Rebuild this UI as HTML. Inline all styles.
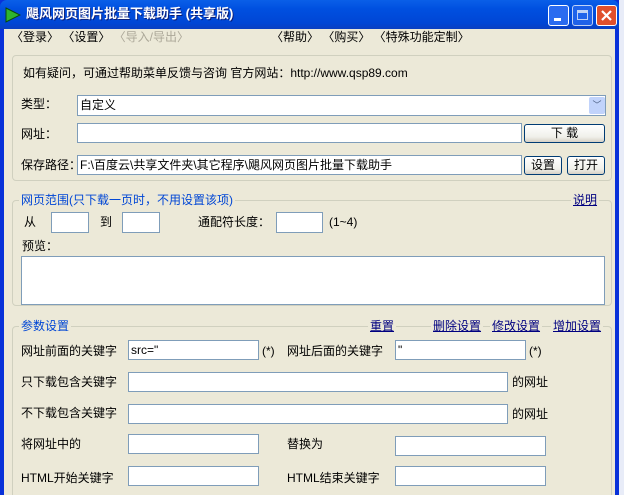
<!DOCTYPE html>
<html style="width:624px;height:495px;overflow:hidden"><head><meta charset="utf-8"><style>
*{margin:0;padding:0;box-sizing:border-box}
body{width:624px;height:495px;overflow:hidden;background:#fff;font-family:"Liberation Sans","Noto Sans CJK SC","WenQuanYi Zen Hei",sans-serif;font-size:12px;line-height:15px;color:#000;position:relative}
.win{position:absolute;left:0;top:0;width:619px;height:495px;background:#0831D9;overflow:hidden}
.title{position:absolute;left:0;top:0;width:619px;height:29px;background:linear-gradient(#0A5FE8,#0050E0 30%,#0046D5 80%,#0A3FC0);border-radius:7px 7px 0 0}
.title .t{position:absolute;left:26px;top:6px;color:#fff;font-weight:bold;font-size:13px;text-shadow:1px 1px #0a1e7a}
.client{position:absolute;left:4px;top:29px;width:611px;height:466px;background:#ECE9D8;overflow:hidden}
.a{position:absolute;white-space:nowrap}
.in{position:absolute;background:#fff;border:1px solid #7F9DB9;padding:2px 2px;font-size:12px;line-height:14px}
.btn{position:absolute;border:1px solid #003C74;border-radius:3px;background:linear-gradient(#fff,#F0F0EA 70%,#D6D0C5);text-align:center;line-height:17px}
.grp{position:absolute;border:1px solid #D0D0BF;border-radius:4px}
.lg{position:absolute;background:#ECE9D8;color:#0046D5;padding:0 2px}
.lk{position:absolute;color:#000080;text-decoration:underline;background:#ECE9D8;padding:0 2px}
.tb{position:absolute;top:5px;width:21px;height:21px;border:1px solid #fff;border-radius:3px;background:#2A6BF0}
.gray{color:#ACA899}
</style></head><body>
<div style="position:absolute;left:619px;top:0;width:5px;height:495px;background:#e8ecf8"></div>
<div class="win">
<div class="title">
<svg style="position:absolute;left:5px;top:7px" width="16" height="16"><polygon points="1,1 15,8 1,15" fill="#2fb52f" stroke="#0a4a0a"/></svg>
<div class="t">飓风网页图片批量下载助手 (共享版)</div>
<div class="tb" style="left:548px"><div style="position:absolute;left:5px;top:12px;width:7px;height:3px;background:#fff"></div></div>
<div class="tb" style="left:572px;opacity:.75"><div style="position:absolute;left:4px;top:4px;width:11px;height:10px;border:1px solid #fff;border-top-width:3px"></div></div>
<div class="tb" style="left:596px;background:#E0502C"><svg width="19" height="19"><path d="M5 5L14 14M14 5L5 14" stroke="#fff" stroke-width="2.2"/></svg></div>
</div>
<div class="client">
<div class="a" style="left:7px;top:1px">〈登录〉 〈设置〉 <span class="gray">〈导入/导出〉</span></div>
<div class="a" style="left:267px;top:1px">〈帮助〉 〈购买〉 〈特殊功能定制〉</div>

<div class="grp" style="left:8px;top:26px;width:600px;height:126px"></div>
<div class="a" style="left:19px;top:37px">如有疑问，可通过帮助菜单反馈与咨询 官方网站：http://www.qsp89.com</div>
<div class="a" style="left:17px;top:68px">类型：</div>
<div class="in" style="left:73px;top:66px;width:529px;height:21px">自定义</div>
<div style="position:absolute;left:585px;top:68px;width:16px;height:17px;background:#C1D3FB;border-radius:2px;color:#4d6185;font-size:9px;text-align:center;line-height:17px">﹀</div>
<div class="a" style="left:17px;top:98px">网址：</div>
<div class="in" style="left:73px;top:94px;width:445px;height:20px"></div>
<div class="btn" style="left:520px;top:95px;width:81px;height:19px">下 载</div>
<div class="a" style="left:17px;top:129px">保存路径：</div>
<div class="in" style="left:73px;top:126px;width:445px;height:20px">F:\百度云\共享文件夹\其它程序\飓风网页图片批量下载助手</div>
<div class="btn" style="left:520px;top:127px;width:38px;height:19px">设置</div>
<div class="btn" style="left:563px;top:127px;width:38px;height:19px">打开</div>

<div class="grp" style="left:8px;top:171px;width:600px;height:106px"></div>
<div class="lg" style="left:15px;top:164px">网页范围(只下载一页时，不用设置该项)</div>
<div class="lk" style="left:567px;top:164px">说明</div>
<div class="a" style="left:20px;top:186px">从</div>
<div class="in" style="left:47px;top:183px;width:38px;height:21px"></div>
<div class="a" style="left:96px;top:186px">到</div>
<div class="in" style="left:118px;top:183px;width:38px;height:21px"></div>
<div class="a" style="left:194px;top:186px">通配符长度：</div>
<div class="in" style="left:272px;top:183px;width:47px;height:21px"></div>
<div class="a" style="left:325px;top:186px">(1~4)</div>
<div class="a" style="left:18px;top:210px">预览：</div>
<div class="in" style="left:17px;top:227px;width:584px;height:49px"></div>

<div class="grp" style="left:8px;top:297px;width:600px;height:169px;border-bottom:none;border-radius:4px 4px 0 0"></div>
<div class="lg" style="left:15px;top:290px">参数设置</div>
<div class="lk" style="left:364px;top:290px">重置</div>
<div class="lk" style="left:427px;top:290px">删除设置</div>
<div class="lk" style="left:486px;top:290px">修改设置</div>
<div class="lk" style="left:547px;top:290px">增加设置</div>

<div class="a" style="left:17px;top:315px">网址前面的关键字</div>
<div class="in" style="left:124px;top:311px;width:131px;height:20px">src="</div>
<div class="a" style="left:258px;top:315px">(*)</div>
<div class="a" style="left:283px;top:315px">网址后面的关键字</div>
<div class="in" style="left:391px;top:311px;width:131px;height:20px">"</div>
<div class="a" style="left:525px;top:315px">(*)</div>

<div class="a" style="left:17px;top:346px">只下载包含关键字</div>
<div class="in" style="left:124px;top:343px;width:380px;height:20px"></div>
<div class="a" style="left:508px;top:346px">的网址</div>
<div class="a" style="left:17px;top:377px">不下载包含关键字</div>
<div class="in" style="left:124px;top:375px;width:380px;height:20px"></div>
<div class="a" style="left:508px;top:378px">的网址</div>

<div class="a" style="left:17px;top:408px">将网址中的</div>
<div class="in" style="left:124px;top:405px;width:131px;height:20px"></div>
<div class="a" style="left:283px;top:408px">替换为</div>
<div class="in" style="left:391px;top:407px;width:151px;height:20px"></div>
<div class="a" style="left:17px;top:442px">HTML开始关键字</div>
<div class="in" style="left:124px;top:437px;width:131px;height:20px"></div>
<div class="a" style="left:283px;top:442px">HTML结束关键字</div>
<div class="in" style="left:391px;top:437px;width:151px;height:20px"></div>
</div>
</div>
</body></html>
